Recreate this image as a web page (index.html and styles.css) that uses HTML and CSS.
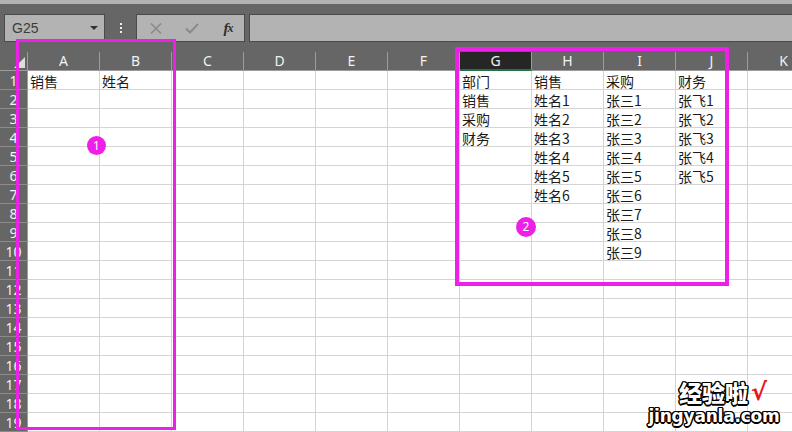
FILE: index.html
```html
<!DOCTYPE html>
<html lang="zh-CN">
<head>
<meta charset="utf-8">
<title>Sheet</title>
<link rel="stylesheet" href="styles.css">
</head>
<body>
<div class="strip"></div>
<div class="toolbar">
  <div class="namebox"><span>G25</span><span class="caret"></span></div>
  <div class="dots"><i></i><i></i><i></i></div>
  <div class="fxbox">
    <span class="btn"><svg width="12" height="11" viewBox="0 0 12 11"><path d="M1 0.5L11 10.5M11 0.5L1 10.5" stroke="#8a8a8a" stroke-width="1.6" fill="none"/></svg></span>
    <span class="btn"><svg width="14" height="11" viewBox="0 0 14 11"><path d="M1 5.5L5 9.5L13 1" stroke="#8a8a8a" stroke-width="2" fill="none"/></svg></span>
    <span class="btn fx">f<sub>x</sub></span>
  </div>
  <div class="formula"></div>
</div>
<div class="sheet">
  <div class="hd corner"><span class="tri"></span></div>
  <div class="hd">A</div><div class="hd">B</div><div class="hd">C</div><div class="hd">D</div><div class="hd">E</div><div class="hd">F</div><div class="hd sel">G</div><div class="hd">H</div><div class="hd">I</div><div class="hd">J</div><div class="hd">K</div>

  <div class="rh">1</div><div class="c">销售</div><div class="c">姓名</div><div class="c"></div><div class="c"></div><div class="c"></div><div class="c"></div><div class="c">部门</div><div class="c">销售</div><div class="c">采购</div><div class="c">财务</div><div class="c"></div>
  <div class="rh">2</div><div class="c"></div><div class="c"></div><div class="c"></div><div class="c"></div><div class="c"></div><div class="c"></div><div class="c">销售</div><div class="c">姓名1</div><div class="c">张三1</div><div class="c">张飞1</div><div class="c"></div>
  <div class="rh">3</div><div class="c"></div><div class="c"></div><div class="c"></div><div class="c"></div><div class="c"></div><div class="c"></div><div class="c">采购</div><div class="c">姓名2</div><div class="c">张三2</div><div class="c">张飞2</div><div class="c"></div>
  <div class="rh">4</div><div class="c"></div><div class="c"></div><div class="c"></div><div class="c"></div><div class="c"></div><div class="c"></div><div class="c">财务</div><div class="c">姓名3</div><div class="c">张三3</div><div class="c">张飞3</div><div class="c"></div>
  <div class="rh">5</div><div class="c"></div><div class="c"></div><div class="c"></div><div class="c"></div><div class="c"></div><div class="c"></div><div class="c"></div><div class="c">姓名4</div><div class="c">张三4</div><div class="c">张飞4</div><div class="c"></div>
  <div class="rh">6</div><div class="c"></div><div class="c"></div><div class="c"></div><div class="c"></div><div class="c"></div><div class="c"></div><div class="c"></div><div class="c">姓名5</div><div class="c">张三5</div><div class="c">张飞5</div><div class="c"></div>
  <div class="rh">7</div><div class="c"></div><div class="c"></div><div class="c"></div><div class="c"></div><div class="c"></div><div class="c"></div><div class="c"></div><div class="c">姓名6</div><div class="c">张三6</div><div class="c"></div><div class="c"></div>
  <div class="rh">8</div><div class="c"></div><div class="c"></div><div class="c"></div><div class="c"></div><div class="c"></div><div class="c"></div><div class="c"></div><div class="c"></div><div class="c">张三7</div><div class="c"></div><div class="c"></div>
  <div class="rh">9</div><div class="c"></div><div class="c"></div><div class="c"></div><div class="c"></div><div class="c"></div><div class="c"></div><div class="c"></div><div class="c"></div><div class="c">张三8</div><div class="c"></div><div class="c"></div>
  <div class="rh">10</div><div class="c"></div><div class="c"></div><div class="c"></div><div class="c"></div><div class="c"></div><div class="c"></div><div class="c"></div><div class="c"></div><div class="c">张三9</div><div class="c"></div><div class="c"></div>
  <div class="rh">11</div><div class="c"></div><div class="c"></div><div class="c"></div><div class="c"></div><div class="c"></div><div class="c"></div><div class="c"></div><div class="c"></div><div class="c"></div><div class="c"></div><div class="c"></div>
  <div class="rh">12</div><div class="c"></div><div class="c"></div><div class="c"></div><div class="c"></div><div class="c"></div><div class="c"></div><div class="c"></div><div class="c"></div><div class="c"></div><div class="c"></div><div class="c"></div>
  <div class="rh">13</div><div class="c"></div><div class="c"></div><div class="c"></div><div class="c"></div><div class="c"></div><div class="c"></div><div class="c"></div><div class="c"></div><div class="c"></div><div class="c"></div><div class="c"></div>
  <div class="rh">14</div><div class="c"></div><div class="c"></div><div class="c"></div><div class="c"></div><div class="c"></div><div class="c"></div><div class="c"></div><div class="c"></div><div class="c"></div><div class="c"></div><div class="c"></div>
  <div class="rh">15</div><div class="c"></div><div class="c"></div><div class="c"></div><div class="c"></div><div class="c"></div><div class="c"></div><div class="c"></div><div class="c"></div><div class="c"></div><div class="c"></div><div class="c"></div>
  <div class="rh">16</div><div class="c"></div><div class="c"></div><div class="c"></div><div class="c"></div><div class="c"></div><div class="c"></div><div class="c"></div><div class="c"></div><div class="c"></div><div class="c"></div><div class="c"></div>
  <div class="rh">17</div><div class="c"></div><div class="c"></div><div class="c"></div><div class="c"></div><div class="c"></div><div class="c"></div><div class="c"></div><div class="c"></div><div class="c"></div><div class="c"></div><div class="c"></div>
  <div class="rh">18</div><div class="c"></div><div class="c"></div><div class="c"></div><div class="c"></div><div class="c"></div><div class="c"></div><div class="c"></div><div class="c"></div><div class="c"></div><div class="c"></div><div class="c"></div>
  <div class="rh">19</div><div class="c"></div><div class="c"></div><div class="c"></div><div class="c"></div><div class="c"></div><div class="c"></div><div class="c"></div><div class="c"></div><div class="c"></div><div class="c"></div><div class="c"></div>
</div>

<div class="mark mark-1"></div>
<div class="mark mark-2"></div>
<div class="badge badge-1">1</div>
<div class="badge badge-2">2</div>

<div class="watermark">
  <div class="wm-top"><span class="wm-cn">经验啦</span><span class="wm-check">√</span></div>
  <div class="wm-url">jingyanla.com</div>
</div>
</body>
</html>
```

FILE: styles.css
```css
* { box-sizing: border-box; margin: 0; padding: 0; }
html, body { width: 792px; height: 432px; overflow: hidden; }
body {
  background: #666666;
  font-family: "Noto Sans CJK SC", "Noto Sans", sans-serif;
  position: relative;
}
.strip { height: 4px; background: #b2b2b2; }

.toolbar {
  display: flex;
  height: 28px;
  margin: 10px 0 10px 4px;
}
.namebox {
  width: 101px;
  background: #b3b3b3;
  border: 1px solid #4a4a4a;
  display: flex;
  align-items: center;
  justify-content: space-between;
  padding: 0 5px 0 7px;
  font: 14px "Liberation Sans", sans-serif;
  color: #3c3c3c;
}
.caret {
  width: 0; height: 0;
  border-left: 4px solid transparent;
  border-right: 4px solid transparent;
  border-top: 4px solid #333;
  margin-right: 1px;
}
.dots {
  width: 31px;
  display: flex;
  flex-direction: column;
  align-items: center;
  justify-content: center;
  gap: 2px;
}
.dots i { display: block; width: 2px; height: 2px; background: #f0f0f0; }
.fxbox {
  width: 109px;
  background: #b3b3b3;
  border: 1px solid #4a4a4a;
  display: flex;
  align-items: center;
  gap: 14px;
  padding-left: 8px;
}
.btn { width: 22px; display: flex; justify-content: center; align-items: center; }
.fx {
  font: italic bold 15px "Liberation Serif", serif;
  color: #2e2e2e;
  letter-spacing: -1px;
}
.fx sub { font-size: 12px; vertical-align: -1px; }
.formula {
  flex: 1;
  margin-left: 4px;
  background: #b3b3b3;
  border: 1px solid #4a4a4a;
  border-right: none;
}

.sheet {
  display: grid;
  grid-template-columns: 28px repeat(11, 72px);
  grid-auto-rows: 19px;
}
.hd {
  background: #666666;
  color: #f2f2f2;
  font: 14px "Noto Sans", sans-serif;
  line-height: 18px;
  text-align: center;
  border-right: 1px solid #9c9c9c;
  border-bottom: 1px solid #9c9c9c;
}
.hd.sel {
  background: #262626;
  border-bottom: 2px solid #217346;
  line-height: 17px;
}
.corner {
  display: flex;
  align-items: flex-end;
  justify-content: flex-end;
  padding: 0 2px 2px 0;
}
.tri {
  width: 0; height: 0;
  border-left: 11px solid transparent;
  border-bottom: 11px solid #dedede;
}
.rh {
  background: #666666;
  color: #eef2f8;
  font: 14px "Noto Sans", sans-serif;
  line-height: 19px;
  text-align: center;
  border-right: 1px solid #9c9c9c;
  border-bottom: 1px solid #8c8c8c;
}
.c {
  background: #ffffff;
  border-right: 1px solid #d4d4d4;
  border-bottom: 1px solid #d4d4d4;
  padding: 1px 0 0 2px;
  font-size: 14px;
  line-height: 18px;
  color: #1a1a1a;
  white-space: nowrap;
  overflow: hidden;
}

.mark {
  position: absolute;
  border-style: solid;
  border-color: #ee1fe6;
}
.mark-1 { left: 16px; top: 39px; width: 160px; height: 391px; border-width: 3px; }
.mark-2 { left: 455px; top: 47px; width: 274px; height: 239px; border-width: 4px; }

.badge {
  position: absolute;
  width: 19px; height: 19px;
  border-radius: 50%;
  background: #ee1fe6;
  color: #fff;
  font: 12px "Noto Sans", sans-serif;
  line-height: 19px;
  text-align: center;
}
.badge-1 { left: 87px; top: 136px; }
.badge-2 { left: 516px; top: 217px; width: 20px; height: 20px; line-height: 20px; }

.watermark {
  position: absolute;
  left: 648px;
  top: 380px;
  width: 132px;
  display: flex;
  flex-direction: column;
  align-items: center;
  gap: 3px;
}
.wm-top { display: flex; align-items: center; gap: 3px; padding-left: 18px; height: 24px; }
.wm-cn {
  font-family: "Noto Sans CJK SC", sans-serif;
  font-weight: 900;
  font-size: 23px;
  line-height: 24px;
  color: #fff;
  text-shadow: -1.5px 0 #000, 1.5px 0 #000, 0 -1.5px #000, 0 1.5px #000,
    -1px -1px #000, 1px 1px #000, -1px 1px #000, 1px -1px #000;
}
.wm-check {
  font: bold 24px "DejaVu Sans", sans-serif;
  color: #e8141c;
  line-height: 24px;
}
.wm-url {
  font: bold 17px "DejaVu Sans", sans-serif;
  line-height: 19px;
  color: #fff;
  letter-spacing: -0.2px;
  text-shadow: -1.5px 0 #000, 1.5px 0 #000, 0 -1.5px #000, 0 1.5px #000,
    -1px -1px #000, 1px 1px #000, -1px 1px #000, 1px -1px #000;
}
```
